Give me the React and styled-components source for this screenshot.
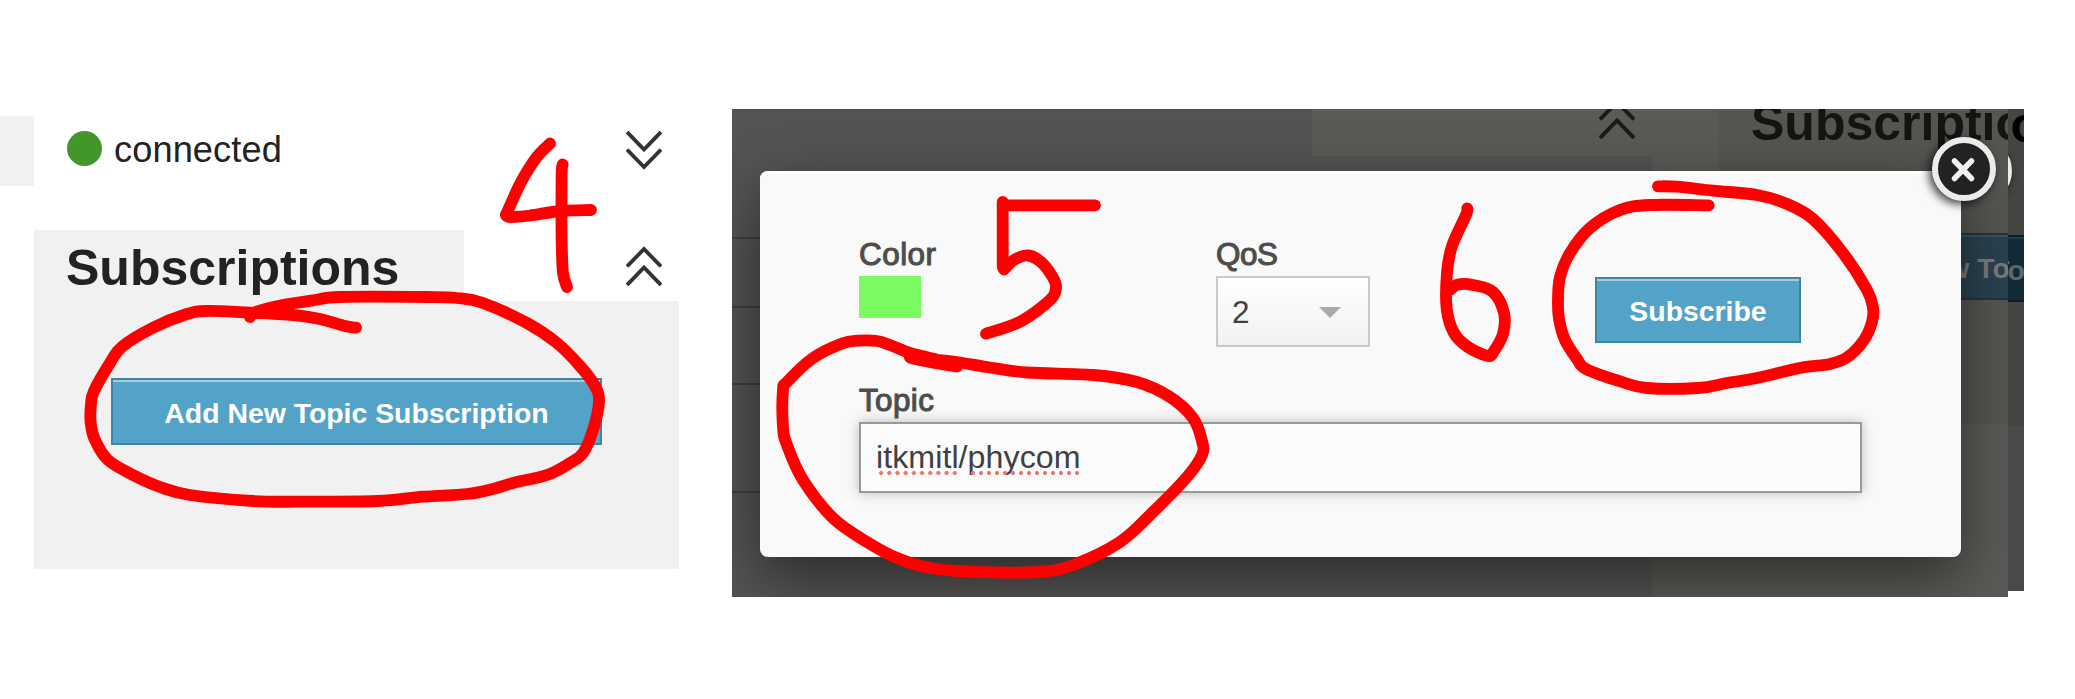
import React from "react";
import styled, { createGlobalStyle } from "styled-components";

const GlobalStyle = createGlobalStyle`
  *, *::before, *::after { box-sizing: border-box; }
  body { margin: 0; background: #fff; }
`;

const Page = styled.main`
  position: relative;
  display: flex;
  align-items: flex-start;
  gap: 53px;
  width: 2075px;
  height: 699px;
  overflow: hidden;
  background: #fff;
  color: #222;
  font-family: "Liberation Sans", Arial, sans-serif;
`;

/* Sidebar */

const Sidebar = styled.section`
  display: flex;
  flex-direction: column;
  gap: 44px;
  width: 679px;
  padding-top: 116px;
`;

const StatusRow = styled.div`
  display: flex;
  align-items: center;
  height: 70px;
  padding-right: 17px;
`;

const SideStub = styled.div`
  align-self: stretch;
  width: 34px;
  background: #f1f1f1;
`;

const Status = styled.div`
  display: flex;
  flex: 1;
  align-items: center;
  gap: 12px;
  padding: 0 0 5px 33px;
  font-size: 36.2px;
  line-height: 40px;
`;

const StatusDot = styled.span`
  width: 35px;
  height: 35px;
  border-radius: 50%;
  background: #43962a;
`;

const StatusText = styled.span`
  padding-top: 3px;
  letter-spacing: 0.1px;
`;

const Chevron = styled.svg`
  flex: none;
  width: 36px;
  height: 40px;
  fill: none;
  stroke: ${(p) => p.$color || "#333"};
  stroke-width: 3.9;
`;

const Panel = styled.div`
  padding-left: 34px;
`;

const PanelHeader = styled.div`
  display: flex;
  align-items: center;
  justify-content: space-between;
  height: 71px;
  padding-right: 17px;
`;

const PanelTitle = styled.h2`
  width: 430px;
  height: 71px;
  margin: 0;
  padding: 2px 0 0 32px;
  background: #f1f1f1;
  font-size: 50px;
  font-weight: 700;
  line-height: 72px;
`;

const PanelBody = styled.div`
  height: 268px;
  padding: 77px 0 0 77px;
  background: #f1f1f1;
`;

const Button = styled.button`
  display: block;
  width: ${(p) => p.$width}px;
  height: ${(p) => p.$height || 67}px;
  padding: 3px 0 0;
  border: 2px solid #3d85a1;
  border-radius: 0;
  background: #53a3c8;
  box-shadow: inset 0 2px 0 #a3cde1;
  color: #fff;
  font: 700 28.4px/1 "Liberation Sans", Arial, sans-serif;
  text-align: center;
  white-space: nowrap;
`;

/* Dimmed page behind the dialog */

const Capture = styled.section`
  position: relative;
  display: flex;
  align-items: flex-start;
  margin-top: 109px;
`;

const Backdrop = styled.div`
  display: flex;
  width: 1276px;
  height: 488px;
  overflow: hidden;
  background: #555452;
`;

const BackdropEdge = styled.div`
  display: flex;
  justify-content: flex-end;
  position: relative;
  width: 16px;
  height: 482px;
  overflow: hidden;
  background: #454443;
`;

const ListColumn = styled.div`
  flex: none;
  width: 580px;
  padding-top: 61px;
`;

const ListRow = styled.div`
  height: ${(p) => p.$height}px;
  border-bottom: 2px solid #403e3e;
`;

const MainColumn = styled.div`
  flex: none;
  width: 340px;
`;

const MainHeader = styled.div`
  display: flex;
  justify-content: flex-end;
  align-items: center;
  height: 47px;
  padding: 0 17px 28px 0;
  background: #5b5a57;
`;

const Gutter = styled.div`
  flex: none;
  width: 66px;
  background: #5b5a57;
`;

const DimSide = styled.div`
  flex: none;
  width: 568px;
  height: 488px;
  margin-right: ${(p) => (p.$edge ? -277 : 0)}px;
  padding-top: ${(p) => (p.$edge ? 2 : 0)}px;
  background: ${(p) =>
    p.$edge
      ? "linear-gradient(#454443 0 317px, #4a4a4a 317px)"
      : "linear-gradient(#565552 0 315px, #5b5a57 315px)"};
`;

const DimTitle = styled.div`
  margin-top: -15px;
  padding-left: 33px;
  color: ${(p) => (p.$edge ? "#000" : "#151412")};
  font-size: 50px;
  font-weight: 700;
  line-height: 58px;
  white-space: nowrap;
`;

const DimButton = styled.div`
  width: 491px;
  height: 67px;
  margin: 81px 0 0 77px;
  padding-left: 51px;
  border: 2px solid ${(p) => (p.$edge ? "#0b1f29" : "#1f3641")};
  background: ${(p) => (p.$edge ? "#102a37" : "#2a4350")};
  box-shadow: inset 0 2px 0 ${(p) => (p.$edge ? "#1c3a49" : "#3f545e")};
  color: ${(p) => (p.$edge ? "#5c686d" : "#7c7b79")};
  font-size: 28.4px;
  font-weight: 700;
  line-height: 66px;
  white-space: nowrap;
`;

/* Dialog */

const Dialog = styled.div`
  position: absolute;
  left: 28px;
  top: 62px;
  width: 1201px;
  height: 386px;
  padding: 61px 99px 0;
  border-radius: 8px;
  background: #f9f9f9;
  box-shadow: inset 0 3px 0 #fff;
  color: #4d4d4d;
`;

const Shade = styled.div`
  position: absolute;
  inset: 0 16px 0 0;
  overflow: hidden;
  &::before {
    content: "";
    position: absolute;
    inset: 62px 47px 40px 28px;
    border-radius: 8px;
    box-shadow: 0 20px 60px rgba(0, 0, 0, 0.5);
  }
`;

const FieldRow = styled.div`
  display: flex;
  height: 115px;
  margin-bottom: 31px;
`;

const Field = styled.div`
  width: ${(p) => (p.$width ? `${p.$width}px` : "auto")};
`;

const Label = styled.div`
  height: 44px;
  padding-top: 1px;
  color: #4d4d4d;
  font-size: 31.4px;
  letter-spacing: ${(p) => p.$spacing || 0}px;
  line-height: 44px;
  -webkit-text-stroke: 1.1px #4d4d4d;
`;

const Swatch = styled.div`
  width: 62px;
  height: 42px;
  background: #7afb62;
`;

const Select = styled.div`
  display: flex;
  align-items: center;
  justify-content: space-between;
  width: 154px;
  height: 71px;
  padding: 2px 27px 0 14px;
  border: 2px solid #c9c9c9;
  background: linear-gradient(#fff, #f1f1f1);
  color: #404040;
  font-size: 31.5px;
`;

const Caret = styled.span`
  border: 11px solid transparent;
  border-top-color: #a9a9a9;
  border-bottom: 0;
`;

const Submit = styled.div`
  margin-left: auto;
  padding: 45px 61px 0 0;
`;

const TextBox = styled.div`
  height: 71px;
  padding-left: 15px;
  border: 2px solid #999;
  background: #fbfbfb;
  box-shadow: 0 0 12px rgba(0, 0, 0, 0.25);
  color: #404040;
  font-size: 32.2px;
  letter-spacing: 0.05px;
  line-height: 67px;
`;

const Misspelled = styled.span`
  position: relative;
  &::after {
    content: "";
    position: absolute;
    left: 1px;
    right: 0;
    bottom: 0;
    height: 4px;
    background: radial-gradient(circle, #f2776b 1.8px, transparent 2.3px) 0 0 / 8.1px 4px round;
  }
`;

const CloseRing = styled.svg`
  position: absolute;
  left: ${(p) => (p.$edge ? -60 : 1200)}px;
  top: ${(p) => (p.$edge ? 30 : 28)}px;
  width: 64px;
  height: 64px;
  overflow: visible;
  filter: drop-shadow(-3px 3px 5px rgba(0, 0, 0, 0.75));
`;

/* Freehand marker strokes over both panels */

const Marker = styled.svg`
  position: absolute;
  inset: 0;
  width: 2075px;
  height: 699px;
  pointer-events: none;
  fill: none;
  stroke: #ff0000;
  stroke-width: 11.8;
  stroke-linecap: round;
  stroke-linejoin: round;
`;

const strokes = [
  // ring round the sidebar button
  [[356,327.7],[345,326],[320,319],[293,315],[247,312.5],[207,311],[187,314],[153,327.7],[122,346.7],[110,363],[94,391],[91,404],[90.7,423],[95,440],[108,460],[133,475],[160,487],[190,495],[253,501],[300,501.7],[377,501],[423,496.7],[467,494],[493,489],[513,483],[547,475],[570,463],[583,453],[593,430],[599,402],[595,386],[580,366],[557,343],[527,323],[483,303],[457,298],[427,297],[340,297],[315,300],[283,305],[257,311.5],[250,317]],
  // ring round the topic field
  [[957,366.5],[935,363],[910,357.5],[925,359],[953,361.5],[987,367],[1027,372.5],[1093,375],[1137,382],[1170,397],[1193,418],[1202,441],[1202,455],[1187,477],[1153,512],[1120,542],[1073,565],[1037,572],[970,571.7],[930,568],[897,558],[867,542],[833,518],[803,480],[787,445],[783,427],[783,390],[787,382],[813,358],[842,343.5],[858,340.7],[877,341],[890,345],[910,353],[935,359]],
  // ring round the dialog button
  [[1708.7,205.3],[1650,205],[1620,210],[1590,228],[1570,253],[1560,277],[1558,300],[1559,319],[1565,340],[1577,359],[1586,369],[1621,381.7],[1647,388],[1698,388],[1727,383],[1757,378],[1801,367.7],[1830,364],[1848,356.7],[1864,340],[1872,322],[1873,308],[1867,290],[1843,253],[1813,219],[1787,204],[1757,195],[1713,190.7],[1677,186.7],[1658,186.3]],
  // 4
  [[550,143.5],[536,158],[520,184],[506,215]],
  [[506,215],[510,217],[530,215.5],[560,211],[591,210]],
  [[562.7,164.5],[561.7,172],[561.5,210],[561.7,243],[563,273],[567,287]],
  // 5
  [[1095,205.3],[1002.7,205.3]],
  [[1002.7,202],[1002.7,267]],
  [[1004,269.5],[1014,260],[1028,255.5],[1041,262],[1052,276],[1056,287],[1050,300],[1020,321.7],[986,333.7]],
  // 6
  [[1467.3,208.5],[1466,215],[1452,246],[1447,273],[1446.7,309],[1454,333],[1468,347],[1488,356],[1494,351],[1503,334],[1504,313],[1493,292],[1473,285],[1458,284.5],[1450,290]],
];

// Catmull-Rom spline through the points, as cubic Béziers.
function smooth(pts) {
  let d = `M${pts[0][0]} ${pts[0][1]}`;
  for (let i = 0; i < pts.length - 1; i++) {
    const a = pts[i - 1] || pts[i];
    const b = pts[i];
    const c = pts[i + 1];
    const e = pts[i + 2] || c;
    d += `C${b[0] + (c[0] - a[0]) / 6} ${b[1] + (c[1] - a[1]) / 6} ${c[0] - (e[0] - b[0]) / 6} ${c[1] - (e[1] - b[1]) / 6} ${c[0]} ${c[1]}`;
  }
  return d;
}

function DoubleChevron({ up, color }) {
  return (
    <Chevron viewBox="0 0 36 40" $color={color}>
      {up ? (
        <path d="M1 20.5L18 3L35 20.5M1 39L18 21.5L35 39" />
      ) : (
        <path d="M1 1L18 18.5L35 1M1 18.5L18 36L35 18.5" />
      )}
    </Chevron>
  );
}

function CloseBadge({ edge }) {
  return (
    <CloseRing viewBox="0 0 64 64" $edge={edge}>
      <circle cx="32" cy="32" r="29" fill="#222" stroke="#ebebeb" strokeWidth="6" />
      <path d="M22.5 24L39.5 41.5M39.5 24L22.5 41.5" fill="none" stroke="#f1f1f1" strokeWidth="5.5" strokeLinecap="round" />
    </CloseRing>
  );
}

function DimSubscriptions({ edge }) {
  return (
    <DimSide $edge={edge}>
      <DimTitle $edge={edge}>Subscriptions</DimTitle>
      <DimButton $edge={edge}>Add New Topic Subscription</DimButton>
    </DimSide>
  );
}

export default function App() {
  return (
    <Page>
      <GlobalStyle />
      <Sidebar>
        <StatusRow>
          <SideStub />
          <Status>
            <StatusDot />
            <StatusText>connected</StatusText>
          </Status>
          <DoubleChevron />
        </StatusRow>
        <Panel>
          <PanelHeader>
            <PanelTitle>Subscriptions</PanelTitle>
            <DoubleChevron up />
          </PanelHeader>
          <PanelBody>
            <Button $width={491}>Add New Topic Subscription</Button>
          </PanelBody>
        </Panel>
      </Sidebar>

      <Capture>
        <Backdrop>
          <ListColumn>
            <ListRow $height={69} />
            <ListRow $height={69} />
            <ListRow $height={77} />
            <ListRow $height={108} />
          </ListColumn>
          <MainColumn>
            <MainHeader>
              <DoubleChevron up color="#1c1919" />
            </MainHeader>
          </MainColumn>
          <Gutter />
          <DimSubscriptions />
        </Backdrop>
        <BackdropEdge>
          <DimSubscriptions edge />
          <CloseBadge edge />
        </BackdropEdge>
        <Shade />
        <Dialog>
          <FieldRow>
            <Field $width={357}>
              <Label $spacing={0.5}>Color</Label>
              <Swatch />
            </Field>
            <Field>
              <Label $spacing={-0.4}>QoS</Label>
              <Select>
                2
                <Caret />
              </Select>
            </Field>
            <Submit>
              <Button $width={206} $height={66}>Subscribe</Button>
            </Submit>
          </FieldRow>
          <Field>
            <Label $spacing={0.4}>Topic</Label>
            <TextBox>
              <Misspelled>itkmitl</Misspelled>/<Misspelled>phycom</Misspelled>
            </TextBox>
          </Field>
        </Dialog>
        <CloseBadge />
      </Capture>

      <Marker viewBox="0 0 2075 699">
        {strokes.map((pts, i) => (
          <path key={i} d={smooth(pts)} />
        ))}
      </Marker>
    </Page>
  );
}
